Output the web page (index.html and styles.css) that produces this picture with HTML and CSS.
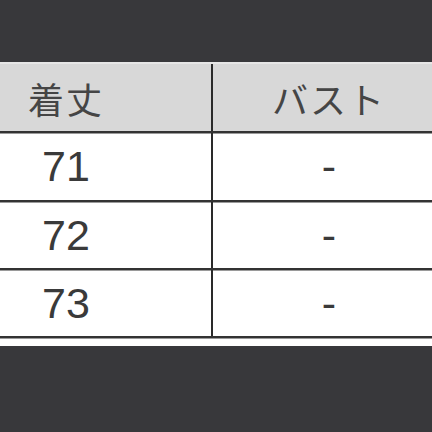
FILE: index.html
```html
<!DOCTYPE html>
<html lang="ja">
<head>
<meta charset="utf-8">
<link rel="stylesheet" href="styles.css">
</head>
<body>
<div class="frame">
  <div class="sheet">
    <div class="row head">
      <div class="cell left jp">着丈</div>
      <div class="cell right jp">バスト</div>
    </div>
    <div class="row r1">
      <div class="cell left num">71</div>
      <div class="cell right num">-</div>
    </div>
    <div class="row r2">
      <div class="cell left num">72</div>
      <div class="cell right num">-</div>
    </div>
    <div class="row r3">
      <div class="cell left num">73</div>
      <div class="cell right num">-</div>
    </div>
  </div>
</div>
</body>
</html>
```
FILE: styles.css
```css
html, body {
  margin: 0;
  padding: 0;
  width: 432px;
  height: 432px;
  overflow: hidden;
  background: #38383b;
}
.frame {
  padding-top: 62px;
  overflow: hidden;
  width: 432px;
}
.sheet {
  margin-left: -79px;
  width: 524px;
  background: #ffffff;
  border-top: 2px solid #e6e6e6;
  padding-bottom: 8px;
}
.row {
  display: grid;
  grid-template-columns: 292px 232px;
  border-bottom: 2px solid #333333;
  box-shadow: 0 1px 0 #9a9a9a;
}
.head { height: 67px; background: #d8d8d8; }
.r1 { height: 67px; }
.r2 { height: 66px; }
.r3 { height: 66px; }
.cell {
  display: flex;
  align-items: center;
  justify-content: center;
  color: #3a3a3a;
}
.left { border-right: 2px solid #2a2a2a; }
.jp {
  font-family: "Noto Sans CJK JP", sans-serif;
  font-size: 36px;
  letter-spacing: 2px;
  color: #454545;
}
.num {
  font-family: "Liberation Sans", Arial, sans-serif;
  font-size: 43px;
}
```
